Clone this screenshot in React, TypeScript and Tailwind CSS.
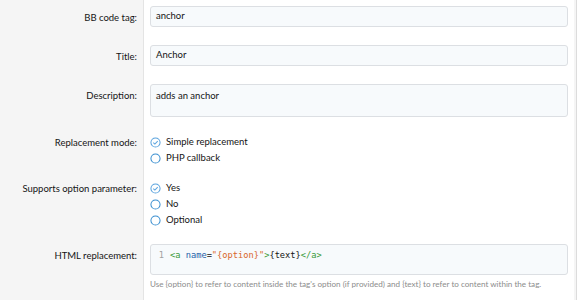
import { ReactNode } from "react";

function Row({ label, children, top }: { label: string; children: ReactNode; top: string }) {
  return (
    <div className="flex">
      <div className={`w-[143px] shrink-0 whitespace-nowrap pr-[6px] text-right leading-[15px] ${top}`}>{label}</div>
      <div className="flex-1 border-l border-[#e4e4e4] bg-white px-[6px] py-[6px]">{children}</div>
    </div>
  );
}

function Radio({ checked, label }: { checked?: boolean; label: string }) {
  return (
    <div className="flex h-[16px] items-center gap-[5px]">
      {checked ? (
        <svg width="11" height="11" viewBox="0 0 12 12" className="shrink-0">
          <circle cx="6" cy="6" r="5" fill="none" stroke="#5aa3de" strokeWidth="1.1" />
          <path d="M3.6 6.1 L5.3 7.7 L8.4 4.5" fill="none" stroke="#5aa3de" strokeWidth="1.1" />
        </svg>
      ) : (
        <svg width="11" height="11" viewBox="0 0 12 12" className="shrink-0">
          <circle cx="6" cy="6" r="5" fill="none" stroke="#3a8fd0" strokeWidth="1.1" />
        </svg>
      )}
      <span>{label}</span>
    </div>
  );
}

export default function App() {
  const input = "w-full rounded-[3px] border border-[#dcdfe3] bg-[#f7fafc] px-[5px] text-[#141414]";
  return (
    <div
      className="h-[300px] w-[577px] overflow-hidden bg-[#f5f5f5] text-[9.5px] text-[#141414]"
      style={{ fontFamily: 'Lato, "Noto Sans", sans-serif' }}
    >
      <div className="flex h-full flex-col border-r border-[#dcdcdc] pr-[2px]">
        <div className="flex flex-col">
          <Row label="BB code tag:" top="pt-[10px]">
            <div className={`${input} flex h-[21px] items-center`}>anchor</div>
          </Row>
          <Row label="Title:" top="pt-[16px]">
            <div className="pt-[6px]">
              <div className={`${input} flex h-[21px] items-center`}>Anchor</div>
            </div>
          </Row>
          <Row label="Description:" top="pt-[16px]">
            <div className="pt-[6px]">
              <div className={`${input} h-[33px] pt-[4px]`}>adds an anchor</div>
            </div>
          </Row>
          <Row label="Replacement mode:" top="pt-[12px]">
            <div className="pt-[5px]">
              <Radio checked label="Simple replacement" />
              <Radio label="PHP callback" />
            </div>
          </Row>
          <Row label="Supports option parameter:" top="pt-[9px]">
            <div className="pt-[2px]">
              <Radio checked label="Yes" />
              <Radio label="No" />
              <Radio label="Optional" />
            </div>
          </Row>
          <Row label="HTML replacement:" top="pt-[14px]">
            <div className="pt-[4px]">
              <div
                className="h-[31px] rounded-[3px] border border-[#dcdfe3] bg-[#f7fafc] pt-[4px] text-[8.7px] leading-[13px]"
                style={{ fontFamily: '"DejaVu Sans Mono", monospace' }}
              >
                <div className="flex">
                  <span className="w-[13px] text-right text-[#a0a0a0]">1</span>
                  <span className="pl-[6px]">
                    <span className="text-[#3a9a3a]">&lt;a</span>{" "}
                    <span className="text-[#1f5fa8]">name</span>
                    <span>=</span>
                    <span className="text-[#d9652b]">"{"{option}"}"</span>
                    <span className="text-[#3a9a3a]">&gt;</span>
                    <span>{"{text}"}</span>
                    <span className="text-[#3a9a3a]">&lt;/a&gt;</span>
                  </span>
                </div>
              </div>
              <div className="whitespace-nowrap pt-[3px] text-[8.1px] text-[#8c8c8c]">
                Use {"{option}"} to refer to content inside the tag's option (if provided) and {"{text}"} to refer to content within the tag.
              </div>
            </div>
          </Row>
        </div>
        <div className="flex flex-1">
          <div className="w-[143px]" />
          <div className="flex-1 border-l border-[#e4e4e4] bg-white" />
        </div>
      </div>
    </div>
  );
}
